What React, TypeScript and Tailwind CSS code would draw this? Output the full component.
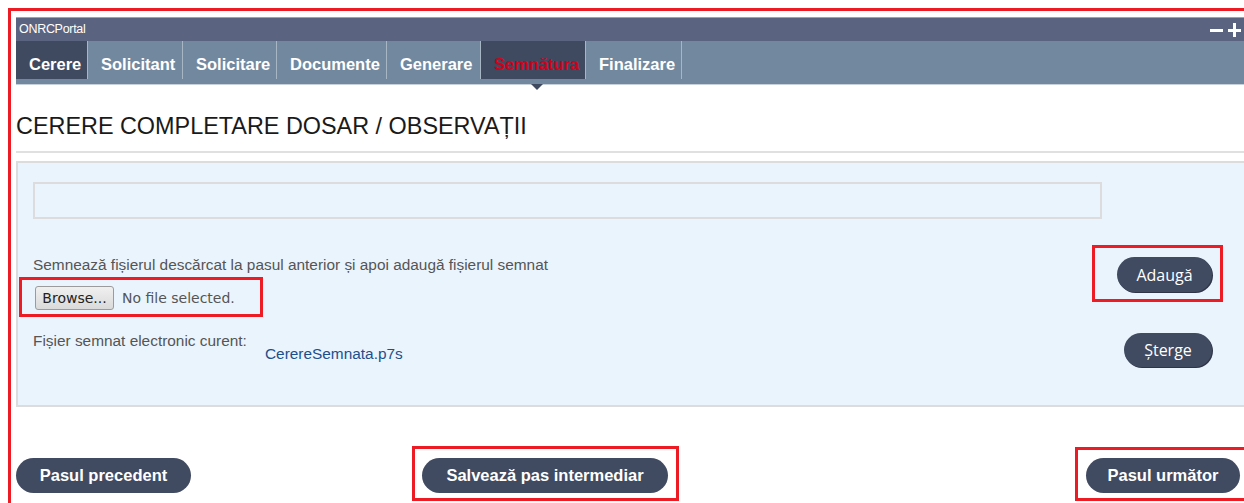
import React from 'react';

// Wizard step "Semnătura": upload the signed request file.
const tabs = [
  { label: 'Cerere', w: 'w-[72px]', active: true },
  { label: 'Solicitant', w: 'w-[95px]' },
  { label: 'Solicitare', w: 'w-[94px]' },
  { label: 'Documente', w: 'w-[110px]' },
  { label: 'Generare', w: 'w-[94px]' },
  { label: 'Semnătura', w: 'w-[105px]', active: true, current: true },
  { label: 'Finalizare', w: 'w-[96px]' },
];

const arial = { fontFamily: '"Liberation Sans", Arial, sans-serif' };

function PillButton({ children, className = '' }: { children: React.ReactNode; className?: string }) {
  return (
    <button
      className={`h-[35px] rounded-full bg-[#404a60] text-white font-bold text-[16.5px] ${className}`}
      style={arial}
    >
      {children}
    </button>
  );
}

function SmallPill({ children, className = '' }: { children: React.ReactNode; className?: string }) {
  return (
    <button
      className={`rounded-full bg-[#404a60] text-white text-[16px] shadow-[1px_1px_0_#2e3547] ${className}`}
      style={{ fontFamily: '"Open Sans", sans-serif' }}
    >
      {children}
    </button>
  );
}

function Marker({ className }: { className: string }) {
  return <div className={`pointer-events-none absolute border-[3px] border-[#ed1c24] ${className}`} />;
}

export default function App() {
  return (
    <div className="relative h-[503px] w-[1244px] overflow-hidden bg-white" style={arial}>
      <div className="ml-[8px] mt-[8px] h-[495px] w-[1250px] border-l-[3px] border-t-[3px] border-[#ed1c24] pl-[5px] pt-[6px]">
        <div className="w-[1228px]">
          {/* portal title bar */}
          <div className="flex h-[24px] items-center justify-between border-t border-[#9aa2b6] bg-[#5a6380] pl-[3px] pr-[3px]">
            <span className="text-[12.5px] tracking-[-0.3px] text-white">ONRCPortal</span>
            <svg width="31" height="14" viewBox="0 0 31 14" className="mt-[1px]">
              <rect x="0" y="6" width="13" height="3" fill="#fff" />
              <rect x="18" y="6" width="13" height="3" fill="#fff" />
              <rect x="23" y="0" width="3" height="14" fill="#fff" />
            </svg>
          </div>

          {/* step tabs */}
          <div className="flex h-[44px] border-b border-[#c7d0db] bg-[#72889f]">
            {tabs.map((t) => (
              <div
                key={t.label}
                className={`relative flex h-[38px] items-center border-r border-[#a7b5c5] pl-[13px] pt-[8px] text-[16.5px] font-bold ${t.w} ${
                  t.active ? 'bg-[#3f4a61]' : ''
                } ${t.current ? 'text-[#d0021b]' : 'text-white'}`}
              >
                {t.label}
                {t.current && (
                  <span className="absolute left-[50px] top-[43px] h-0 w-0 border-l-[6px] border-r-[6px] border-t-[6px] border-l-transparent border-r-transparent border-t-[#3f4a61]" />
                )}
              </div>
            ))}
          </div>

          <h1 className="mt-[28px] text-[23.4px] leading-[26px] text-[#1a1a1a]">CERERE COMPLETARE DOSAR / OBSERVAȚII</h1>
          <div className="mt-[12px] h-[2px] bg-[#e0e0e0]" />

          {/* signature panel */}
          <div className="mt-[8px] h-[246px] border-2 border-r-0 border-[#dcdcdc] bg-[#eaf4fd] pl-[15px] pr-[32px] pt-[19px]">
            <div className="h-[37px] w-[1069px] border-2 border-[#dcdcdc] bg-[#eaf4fd]" />

            <div className="mt-[38px] flex items-start justify-between">
              <div>
                <div className="text-[15.4px] leading-[16px] text-[#555]">
                  Semnează fișierul descărcat la pasul anterior și apoi adaugă fișierul semnat
                </div>
                <div
                  className="mt-[13px] flex h-[24px] items-center gap-[8px] text-[14px]"
                  style={{ fontFamily: '"DejaVu Sans", sans-serif' }}
                >
                  <button className="ml-[2px] h-[24px] w-[79px] rounded-[3px] border border-[#9b9b9b] bg-gradient-to-b from-[#f0f0f0] to-[#dadada] text-[#222]">
                    Browse...
                  </button>
                  <span className="text-[#555]">No file selected.</span>
                </div>
              </div>
              <SmallPill className="h-[35px] w-[95px]">Adaugă</SmallPill>
            </div>

            <div className="mt-[23px] flex items-start justify-between">
              <div className="flex">
                <span className="w-[232px] text-[15.4px] leading-[16px] text-[#555]">Fișier semnat electronic curent:</span>
                <a className="mt-[13px] text-[15.4px] leading-[16px] text-[#1d4f8c]">CerereSemnata.p7s</a>
              </div>
              <SmallPill className="h-[34px] w-[88px]">Șterge</SmallPill>
            </div>
          </div>

          {/* step navigation */}
          <div className="mt-[51px] flex items-center pr-[4px]">
            <PillButton className="w-[175px]">Pasul precedent</PillButton>
            <PillButton className="ml-[231px] w-[246px]">Salvează pas intermediar</PillButton>
            <PillButton className="ml-auto w-[154px]">Pasul următor</PillButton>
          </div>
        </div>
      </div>

      <Marker className="left-[19px] top-[277px] h-[40px] w-[244px]" />
      <Marker className="left-[1092px] top-[245px] h-[57px] w-[131px]" />
      <Marker className="left-[412px] top-[446px] h-[55px] w-[267px]" />
      <Marker className="left-[1075px] top-[447px] h-[54px] w-[175px]" />
    </div>
  );
}
